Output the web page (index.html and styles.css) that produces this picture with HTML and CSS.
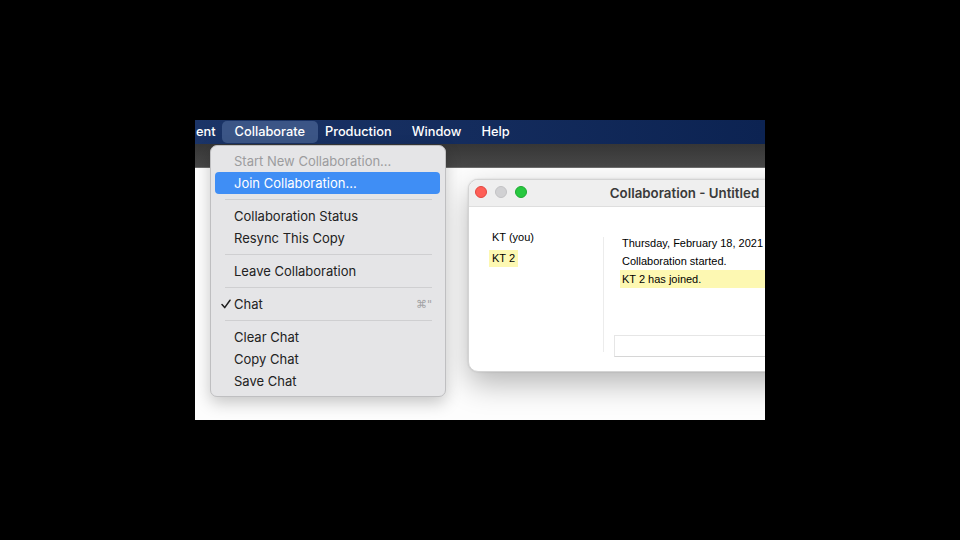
FILE: index.html
```html
<!DOCTYPE html>
<html>
<head>
<meta charset="utf-8">
<link rel="stylesheet" href="styles.css">
</head>
<body>
<div class="screen">
  <div class="menubar">
    <span class="mbi first">ent</span>
    <span class="mbi active">Collaborate</span>
    <span class="mbi">Production</span>
    <span class="mbi">Window</span>
    <span class="mbi">Help</span>
  </div>
  <div class="toolbar"></div>
  <div class="desk"></div>

  <div class="win">
    <div class="titlebar">
      <div class="lights">
        <span class="light red"></span>
        <span class="light gray"></span>
        <span class="light green"></span>
      </div>
      <div class="title">Collaboration - Untitled</div>
    </div>
    <div class="winbody">
      <div class="users">
        <div class="user">KT (you)</div>
        <div class="user hl">KT 2</div>
      </div>
      <div class="divider"></div>
      <div class="chat">
        <div class="msgs">
          <div class="msg">Thursday, February 18, 2021</div>
          <div class="msg">Collaboration started.</div>
          <div class="msg hl">KT 2 has joined.</div>
        </div>
        <div class="input"></div>
      </div>
    </div>
  </div>

  <div class="menu">
    <div class="item disabled"><span class="chk"></span>Start New Collaboration...</div>
    <div class="item selected"><span class="chk"></span>Join Collaboration...</div>
    <div class="sep"></div>
    <div class="item"><span class="chk"></span>Collaboration Status</div>
    <div class="item"><span class="chk"></span>Resync This Copy</div>
    <div class="sep"></div>
    <div class="item"><span class="chk"></span>Leave Collaboration</div>
    <div class="sep"></div>
    <div class="item"><span class="chk"><svg width="10" height="10" viewBox="0 0 10 10"><path d="M1 5.6 L3.7 8.6 L9 1.2" fill="none" stroke="#1e1e1e" stroke-width="1.5" stroke-linecap="round" stroke-linejoin="round"/></svg></span>Chat<span class="sc">⌘"</span></div>
    <div class="sep"></div>
    <div class="item"><span class="chk"></span>Clear Chat</div>
    <div class="item"><span class="chk"></span>Copy Chat</div>
    <div class="item"><span class="chk"></span>Save Chat</div>
  </div>
</div>
</body>
</html>
```
FILE: styles.css
```css
* { box-sizing: border-box; margin: 0; padding: 0; }
html, body { background: #000; height: 100%; }
body {
  padding: 120px 0 0 195px;
  font-family: Inter, "Liberation Sans", sans-serif;
}
.screen {
  position: relative;
  width: 570px;
  height: 300px;
  overflow: hidden;
  display: flex;
  flex-direction: column;
  background: #fdfdfd;
}
.menubar {
  height: 24px;
  flex: none;
  display: flex;
  align-items: center;
  background: linear-gradient(90deg, #1b3467, #0c2352);
  color: #fff;
  font-size: 12.8px;
  font-weight: 500;
}
.mbi { padding: 0 10px; line-height: 22px; white-space: nowrap; }
.mbi.first { padding: 0 9px 0 1px; }
.mbi.active {
  padding: 0 13px;
  margin: 0 -3px;
  background: #3b5586;
  border-radius: 5px;
}
.toolbar {
  height: 24px;
  flex: none;
  background: linear-gradient(#363636, #474747);
  border-bottom: 1px solid #6c6c6c;
}
.desk { flex: 1; background: #fdfdfd; }

/* window */
.win {
  position: absolute;
  left: 273px;
  top: 59px;
  width: 436px;
  height: 193px;
  border-radius: 10px;
  background: #fff;
  border: 1px solid #d4d4d4;
  box-shadow: 0 12px 30px rgba(0,0,0,0.28), 0 0 2px rgba(0,0,0,0.15);
  display: flex;
  flex-direction: column;
  overflow: hidden;
}
.titlebar {
  height: 27px;
  flex: none;
  position: relative;
  background: #efefef;
  border-bottom: 1px solid #dedede;
  display: flex;
  align-items: center;
  justify-content: center;
}
.lights {
  position: absolute;
  left: 6px;
  top: 6px;
  display: flex;
  gap: 8px;
}
.light { width: 12px; height: 12px; border-radius: 50%; }
.light.red { background: #fe5f57; border: 0.5px solid #e2463f; }
.light.gray { background: #d1d1d3; border: 0.5px solid #c2c2c4; }
.light.green { background: #28c840; border: 0.5px solid #1eaa31; }
.title {
  font-size: 13.3px;
  font-weight: 600;
  color: #3a3a3a;
  margin-left: -3px;
}
.winbody {
  flex: 1;
  display: flex;
  font-family: "Liberation Sans", Arial, sans-serif;
  font-size: 11px;
  color: #000;
}
.users {
  width: 134px;
  flex: none;
  padding: 22px 0 0 20px;
  display: flex;
  flex-direction: column;
  align-items: flex-start;
  gap: 4px;
}
.user { height: 17px; line-height: 17px; padding: 0 3px; }
.hl { background: #fdf8b2; }
.divider {
  width: 1px;
  flex: none;
  margin-top: 30px;
  height: 115px;
  background: #ececec;
}
.chat {
  flex: 1;
  padding: 27px 0 0 10px;
  display: flex;
  flex-direction: column;
}
.msgs { padding-left: 6px; display: flex; flex-direction: column; }
.msg { height: 18px; line-height: 18px; padding: 0 2px; }
.input {
  margin-top: 47px;
  height: 22px;
  border: 1px solid #e6e6e6;
  border-bottom-color: #d6d6d6;
  background: #fff;
}

/* dropdown menu */
.menu {
  position: absolute;
  left: 15px;
  top: 25px;
  width: 236px;
  height: 252px;
  background: #e5e5e7;
  border: 1px solid #bfbfc1;
  border-radius: 7px;
  padding: 4px 0;
  box-shadow: 0 6px 16px rgba(0,0,0,0.22);
  font-size: 13px;
  color: #222;
}
.item {
  height: 22px;
  margin: 0 5px 0 4px;
  padding-left: 6px;
  display: flex;
  align-items: center;
  border-radius: 4px;
  white-space: nowrap;
}
.chk { width: 13px; flex: none; display: flex; align-items: center; }
.item.disabled { color: #9c9c9e; }
.item.selected { background: #3f8ef5; color: #fff; }
.sc {
  margin-left: auto;
  padding-right: 8px;
  color: #a3a3a5;
  font-family: "DejaVu Sans", sans-serif;
  font-size: 11px;
}
.sep {
  height: 11px;
  margin: 0 13px 0 14px;
  display: flex;
  align-items: center;
}
.sep::before {
  content: "";
  flex: 1;
  height: 1px;
  background: #cfcfd1;
}
```
